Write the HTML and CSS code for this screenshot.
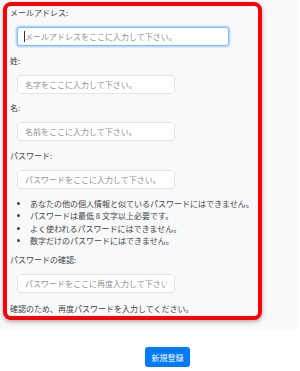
FILE: index.html
```html
<!DOCTYPE html>
<html>
  <head>
    <meta charset="utf-8">
    <link rel="stylesheet" href="styles.css">
  </head>

  <body>
    <div class="panel">
      <form class="signup-box">
        <div class="form-group">
          <label for="email">メールアドレス:</label>
          <div class="input-wrap">
            <input type="email" id="email" class="form-input wide focused" placeholder="メールアドレスをここに入力して下さい。">
            <span class="caret"></span>
          </div>
        </div>

        <div class="form-group">
          <label for="lastName">姓:</label>
          <input type="text" id="lastName" class="form-input" placeholder="名字をここに入力して下さい。">
        </div>

        <div class="form-group">
          <label for="firstName">名:</label>
          <input type="text" id="firstName" class="form-input" placeholder="名前をここに入力して下さい。">
        </div>

        <div class="form-group">
          <label for="password">パスワード:</label>
          <input type="password" id="password" class="form-input" placeholder="パスワードをここに入力して下さい。">
        </div>

        <ul class="rules">
          <li>あなたの他の個人情報と似ているパスワードにはできません。</li>
          <li>パスワードは最低 8 文字以上必要です。</li>
          <li>よく使われるパスワードにはできません。</li>
          <li>数字だけのパスワードにはできません。</li>
        </ul>

        <div class="form-group confirm">
          <label for="password2">パスワードの確認:</label>
          <input type="password" id="password2" class="form-input" placeholder="パスワードをここに再度入力して下さい">
        </div>

        <p class="help-text">確認のため、再度パスワードを入力してください。</p>
      </form>
    </div>

    <div class="actions">
      <button type="button" class="submit-btn">新規登録</button>
    </div>
  </body>
</html>
```

FILE: styles.css
```css
* {
  box-sizing: border-box;
}

body {
  margin: 0;
  width: 300px;
  height: 371px;
  background-color: #fff;
  font-family: "Noto Sans CJK JP", "Noto Sans", sans-serif;
  font-size: 8px;
  color: #444;
}

.panel {
  width: 298px;
  height: 330px;
  padding: 2px 0 0 3px;
  background-color: #f8f9fa;
}

.signup-box {
  width: 259px;
  margin: 0;
  padding: 1px 3px 1px 3px;
  border: 4px solid #ff0000;
  border-radius: 8px;
  background-color: #f8f9fa;
  box-shadow: 0 2px 4px rgba(0, 0, 0, 0.3);
}

.form-group {
  margin-bottom: 8.7px;
}

.form-group label {
  display: block;
  line-height: 12px;
  margin-bottom: 8px;
}

.form-input {
  display: block;
  width: 158px;
  height: 19px;
  margin-left: 7px;
  padding: 0 7px;
  border: 1px solid #e1e4e8;
  border-radius: 3px;
  background-color: #fff;
  font-family: inherit;
  font-size: 8px;
  color: #444;
  outline: none;
}

.form-input::placeholder {
  color: #8f9499;
}

.form-input.wide {
  width: 212px;
}

.form-input.focused {
  border-color: #80bdff;
  box-shadow: 0 0 0 1.5px rgba(0, 123, 255, 0.25);
}

.input-wrap {
  position: relative;
}

.caret {
  position: absolute;
  left: 14px;
  top: 4px;
  width: 1px;
  height: 11px;
  background-color: #333;
}

.rules {
  margin: 0 0 7px 0;
  padding-left: 20px;
  line-height: 12.4px;
}

.form-group.confirm {
  margin-bottom: 10px;
}

.help-text {
  margin: 0;
  line-height: 12px;
}

.actions {
  padding: 17px 0 0 145px;
}

.submit-btn {
  width: 45px;
  height: 20px;
  padding: 0;
  border: none;
  border-radius: 3px;
  background-color: #007bff;
  color: #fff;
  font-family: inherit;
  font-size: 8px;
  cursor: pointer;
}
```
